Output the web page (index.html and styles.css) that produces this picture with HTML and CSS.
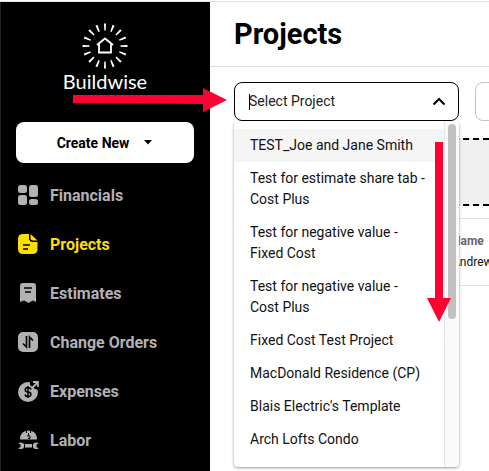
FILE: index.html
```html
<!DOCTYPE html>
<html lang="en">
<head>
    <meta charset="utf-8">
    <title>Projects - Buildwise</title>
    <link rel="stylesheet" href="styles.css">
</head>

<body>
    <div class="app">
        <aside class="sidebar">
            <div class="logo">
                <svg width="46" height="46" viewBox="0 0 46 46" fill="none" stroke="#fff" stroke-width="1.8">
                    <circle class="rays" cx="23" cy="23" r="19" pathLength="160" stroke-width="7" stroke-dasharray="2.4 7.6" stroke-dashoffset="1.2"/>
                    <path d="M15 22l8-6.500 8 6.500M17 21v8.500h12V21"/>
                </svg>
                <span class="logoText">Buildwise</span>
            </div>

            <button class="createButton">
                Create New
                <svg width="10" height="5" viewBox="0 0 10 5"><path d="M1 0h8L5 4.500z" fill="#000"/></svg>
            </button>

            <nav class="menu">
                <a href="#" class="menuItem">
                    <svg width="20" height="20" viewBox="0 0 20 20" fill="currentColor">
                        <rect x="0" y="0" width="9" height="8" rx="2.500"/>
                        <rect x="11" y="0" width="9" height="12" rx="2.500"/>
                        <rect x="0" y="10" width="9" height="10" rx="2.500"/>
                        <rect x="11" y="14" width="9" height="6" rx="2.500"/>
                    </svg>
                    Financials
                </a>
                <a href="#" class="menuItem active">
                    <svg width="20" height="20" viewBox="0 0 20 20" fill="currentColor">
                        <path d="M5 0h6v4q0 4 4 4h4.500v7q0 5-5 5H5q-5 0-5-5V5q0-5 5-5z"/>
                        <path d="M12.500 0l7 6.500H15q-2.500 0-2.500-2.500z"/>
                        <path d="M5 11h7M5 15h5" stroke="#000" stroke-width="1.500"/>
                    </svg>
                    Projects
                </a>
                <a href="#" class="menuItem">
                    <svg width="20" height="20" viewBox="0 0 20 20" fill="currentColor">
                        <path d="M5 0h10q3 0 3 3v16l-3-1.500-2 1-2.500 1.500-2.500-1.500-2-1L2 19V3q0-3 3-3z"/>
                        <path d="M6 5h8M7 9h6" stroke="#000" stroke-width="1.600"/>
                    </svg>
                    Estimates
                </a>
                <a href="#" class="menuItem">
                    <svg width="20" height="20" viewBox="0 0 20 20">
                        <rect width="20" height="20" rx="5" fill="currentColor"/>
                        <path d="M8.500 4v11L5 11.500M11.500 16V5L15 8.500" fill="none" stroke="#000" stroke-width="1.600"/>
                    </svg>
                    Change Orders
                </a>
                <a href="#" class="menuItem">
                    <svg width="21" height="21" viewBox="0 0 21 21">
                        <circle cx="10" cy="11" r="10" fill="currentColor"/>
                        <path d="M12 0h9v9l-4-1-5-4z" fill="#000"/>
                        <path d="M14 7l5-5M15 1h5v5" fill="none" stroke="currentColor" stroke-width="1.800"/>
                        <path d="M13 8.500q-.5-2-3-2-2.800 0-2.800 2.200T10 11t2.900 2.300-2.900 2.300q-2.600 0-3-2.100M10 5v12" fill="none" stroke="#000" stroke-width="1.500"/>
                    </svg>
                    Expenses
                </a>
                <a href="#" class="menuItem">
                    <svg width="21" height="20" viewBox="0 0 21 20">
                        <path d="M2 9.500C2 4 5 .5 10.500.5S19 4 19 9.500z" fill="currentColor"/>
                        <path d="M8.500 0v3M12.500 0v3M10.500 3v2.500M9 6h3M10 8.500h2V6" fill="none" stroke="#000" stroke-width="1"/>
                        <path d="M0 13q5-1.500 5.800 1h9.400q.8-2.500 5.800-1l-2.500 1.500v2.500l2.500 1.500q-5 1.500-5.800-1H5.800Q5 20 0 18.500L2.500 17v-2.500z" fill="currentColor"/>
                        <path d="M6.500 14v4M14.500 14v4" stroke="#000"/>
                    </svg>
                    Labor
                </a>
            </nav>
        </aside>

        <main class="content">
            <header class="pageHeader">
                <h1>Projects</h1>
            </header>

            <div class="filters">
                <div class="projectSelect">
                    <input type="text" class="selectInput" role="combobox" aria-label="Select Project" aria-expanded="true" aria-controls="projectList" placeholder="Select Project">
                    <span class="caret"></span>
                    <svg class="chevron" width="14" height="9" viewBox="0 0 14 9"><path d="M1.500 7.500L7 2l5.500 5.500" fill="none" stroke="#000" stroke-width="2"/></svg>

                    <div class="dropdown">
                        <ul class="options" id="projectList" role="listbox">
                            <li role="option" class="selected">TEST_Joe and Jane Smith</li>
                            <li role="option">Test for estimate share tab - Cost Plus</li>
                            <li role="option">Test for negative value - Fixed Cost</li>
                            <li role="option">Test for negative value - Cost Plus</li>
                            <li role="option">Fixed Cost Test Project</li>
                            <li role="option">MacDonald Residence (CP)</li>
                            <li role="option">Blais Electric's Template</li>
                            <li role="option">Arch Lofts Condo</li>
                        </ul>
                        <div class="scrollTrack"><div class="scrollThumb"></div></div>
                    </div>
                </div>
                <input type="text" class="filterInput" aria-label="Filter">
            </div>

            <div class="dropZone"></div>

            <table class="projectTable">
                <thead>
                    <tr><th class="firstCol"></th><th>Name</th></tr>
                </thead>
                <tbody>
                    <tr><td></td><td>Andrew</td></tr>
                </tbody>
            </table>
        </main>

        <!-- arrows pointing at the select and down the list -->
        <svg class="arrow arrowRight" width="154" height="24" viewBox="0 0 154 24"><path d="M0 7h130V0l24 12-24 12v-8L0 15z" fill="#ff0033"/></svg>
        <svg class="arrow arrowDown" width="24" height="180" viewBox="0 0 24 180"><path d="M8 0h8v156h8l-12 24L0 156h8z" fill="#ff0033"/></svg>
    </div>
</body>

</html>
```

FILE: styles.css
```css
* {
    box-sizing: border-box;
}

body {
    margin: 0;
    padding-top: 1px;
    font-family: Roboto, "Liberation Sans", sans-serif;
    font-size: 14px;
    color: #111;
    background-color: #fff;
}

.app {
    position: relative;
    display: flex;
    height: calc(100vh - 1px);
    overflow: hidden;
    border-top: 1px solid #e0e0e0;
}

/* sidebar */

.sidebar {
    flex: none;
    width: 210px;
    padding: 21px 16px 0 15px;
    border-left: 1px solid #222;
    background-color: #000;
}

.logo {
    display: flex;
    flex-direction: column;
    align-items: center;
    color: #fff;
}

.logoText {
    font-family: Lato, sans-serif;
    font-size: 20px;
    line-height: 24px;
}

.createButton {
    display: flex;
    align-items: center;
    justify-content: center;
    gap: 14px;
    width: 100%;
    height: 41px;
    margin-top: 29px;
    padding: 0;
    border: none;
    border-radius: 8px;
    background-color: #fff;
    color: #000;
    font-family: inherit;
    font-size: 14px;
    font-weight: 700;
}

.menu {
    display: flex;
    flex-direction: column;
    gap: 25px;
    margin-top: 20px;
}

.menuItem {
    display: grid;
    grid-template-columns: 20px 1fr;
    align-items: center;
    gap: 12px;
    height: 24px;
    padding-left: 2px;
    color: #b3b1b3;
    font-size: 16px;
    font-weight: 700;
    text-decoration: none;
}

.menuItem.active {
    color: #ffdd00;
}

/* page */

.content {
    flex: 1;
    min-width: 0;
}

.pageHeader {
    height: 65px;
    padding: 12px 24px;
    border-bottom: 1px solid #e0e0e0;
}

h1 {
    margin: 0;
    font-size: 29px;
    line-height: 40px;
    color: #000;
}

.filters {
    display: flex;
    gap: 16px;
    padding: 15px 0 0 24px;
}

.projectSelect {
    position: relative;
    flex: none;
    width: 225px;
}

.selectInput,
.filterInput {
    width: 100%;
    height: 39px;
    padding: 0 14px 2px;
    border: 1px solid #000;
    border-radius: 8px;
    background-color: #fff;
    font-family: inherit;
    font-size: 14px;
    outline: none;
}

.selectInput {
    display: block;
}

.selectInput::placeholder {
    color: #222;
}

.filterInput {
    flex: none;
    width: 225px;
    border-color: #c4c4c4;
}

.caret {
    position: absolute;
    left: 15px;
    top: 12px;
    width: 1px;
    height: 16px;
    background-color: #000;
}

.chevron {
    position: absolute;
    right: 13px;
    top: 15px;
}

.dropdown {
    position: absolute;
    z-index: 2;
    top: 100%;
    left: 0;
    right: 0;
    display: flex;
    height: 346px;
    overflow: hidden;
    border-radius: 4px;
    background-color: #fff;
    box-shadow: 0 1px 3px rgba(0, 0, 0, 0.4);
}

.options {
    flex: 1;
    margin: 0;
    padding: 8px 0;
    list-style: none;
}

.options li {
    padding: 6px 16px;
    line-height: 21px;
}

.options .selected {
    background-color: #f5f5f5;
}

.scrollTrack {
    width: 15px;
    padding: 3px;
    border-left: 1px solid #e8e8e8;
    background-color: #fafafa;
}

.scrollThumb {
    width: 8px;
    height: 195px;
    border-radius: 4px;
    background-color: #c1c1c1;
}

.dropZone {
    height: 68px;
    margin: 17px 0 12px 24px;
    border-top: 2px dashed #000;
    border-bottom: 2px dashed #000;
    background-color: #f0f0f0;
}

.projectTable {
    width: calc(100% - 24px);
    margin-left: 24px;
    border-collapse: collapse;
    border-top: 1px solid #e0e0e0;
    border-bottom: 1px solid #e0e0e0;
    font-size: 12px;
    text-align: left;
}

.projectTable th {
    height: 32px;
    padding: 12px 0 0;
    color: #666;
}

.projectTable td {
    height: 35px;
    padding: 0 0 12px;
}

.projectTable .firstCol {
    width: 218px;
    min-width: 218px;
}

.arrow {
    position: absolute;
    z-index: 3;
}

.arrowRight {
    left: 73px;
    top: 86px;
}

.arrowDown {
    left: 427px;
    top: 140px;
}
```
